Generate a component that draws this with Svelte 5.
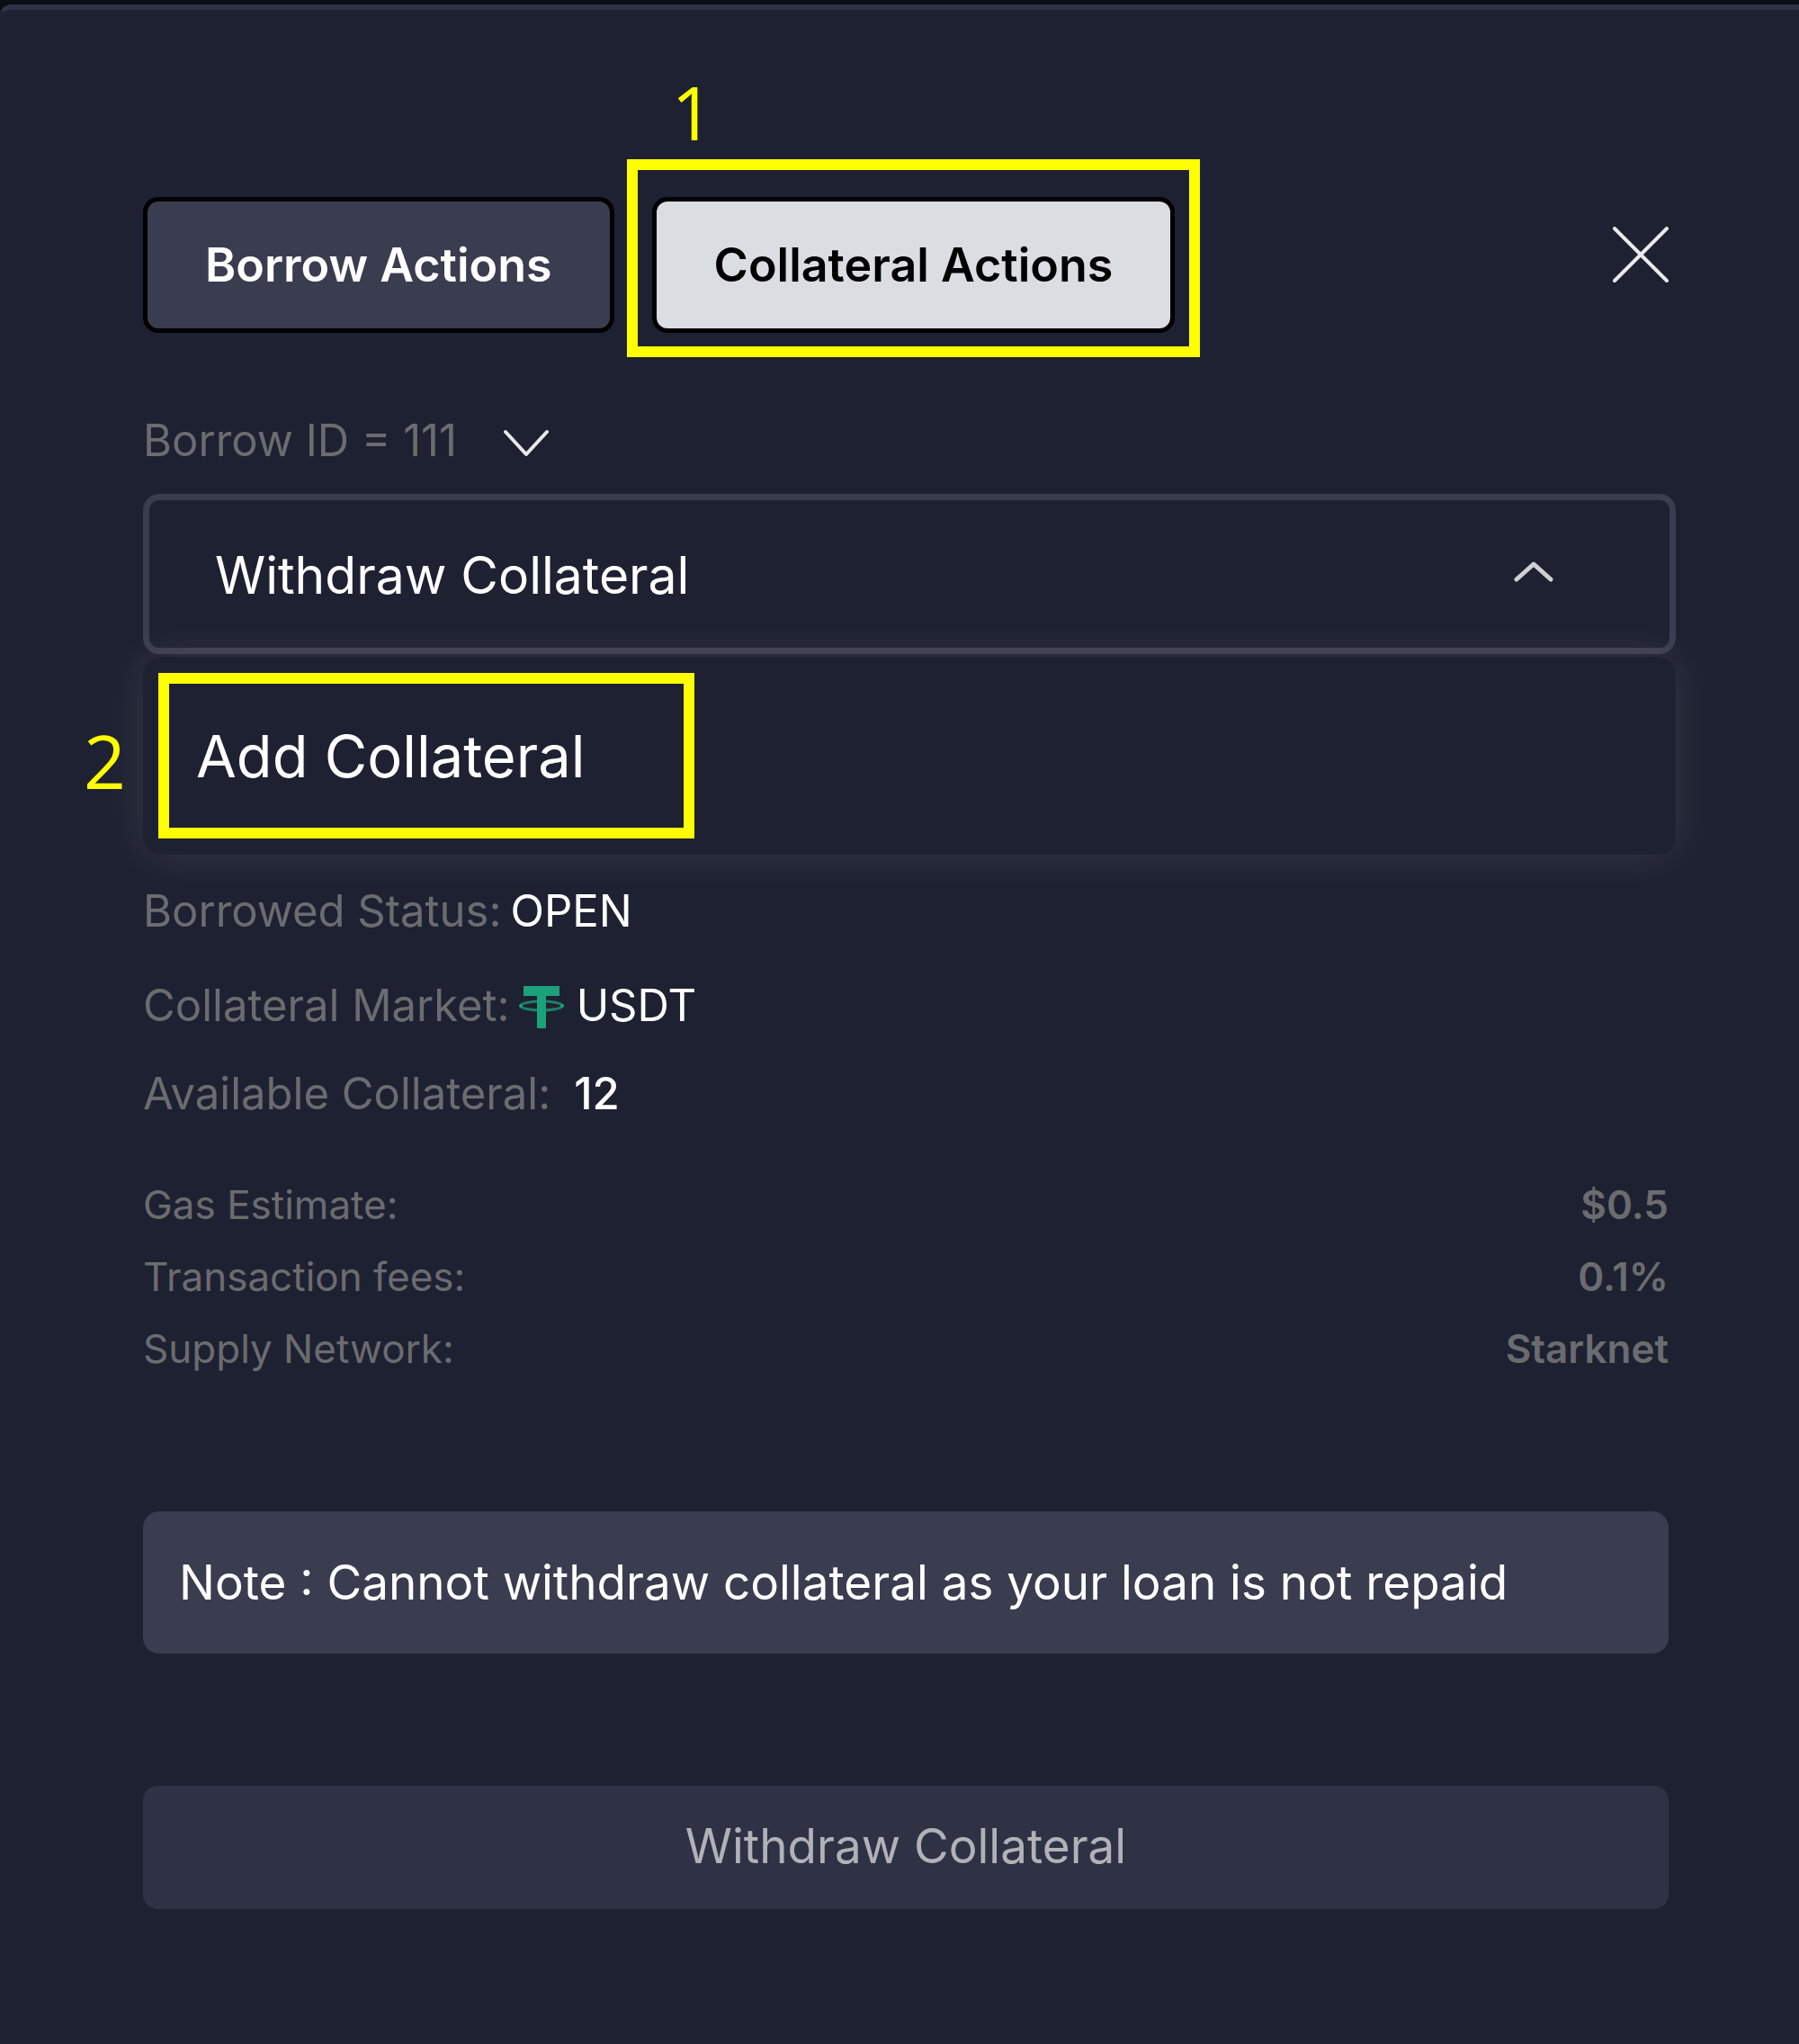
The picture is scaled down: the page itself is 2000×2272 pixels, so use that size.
<script>
  const tabs = [
    { label: 'Borrow Actions', active: false },
    { label: 'Collateral Actions', active: true, step: 1 }
  ];

  const fees = [
    ['Gas Estimate:', '$0.5'],
    ['Transaction fees:', '0.1%'],
    ['Supply Network:', 'Starknet']
  ];
</script>

<main class="modal">
  <header>
    <div class="tabs" role="tablist">
      {#each tabs as tab}
        <div class="tab-slot">
          <button class="tab" class:active={tab.active} role="tab" aria-selected={tab.active}>{tab.label}</button>
          {#if tab.step}
            <span class="frame" aria-hidden="true"></span>
            <span class="step step-one">{tab.step}</span>
          {/if}
        </div>
      {/each}
    </div>
    <button class="close" aria-label="Close">
      <svg width="62" height="62" viewBox="0 0 62 62" fill="none" stroke="#e9e9eb" stroke-width="4" stroke-linecap="round">
        <path d="M2 2 60 60M60 2 2 60" />
      </svg>
    </button>
  </header>

  <button class="borrow-id" aria-haspopup="listbox">
    <span>Borrow ID = 111</span>
    <svg width="50" height="36" viewBox="0 0 50 36" fill="none" stroke="#e9e9eb" stroke-width="4" stroke-linecap="round" stroke-linejoin="round">
      <path d="M2 8 25 33 48 8" />
    </svg>
  </button>

  <div class="dropdown">
    <button class="select" aria-haspopup="listbox" aria-expanded="true">
      <span>Withdraw Collateral</span>
      <svg width="44" height="32" viewBox="0 0 44 32" fill="none" stroke="#cfd0d4" stroke-width="5" stroke-linecap="round" stroke-linejoin="round">
        <path d="M3 21 22 4 41 21" />
      </svg>
    </button>
    <div class="options" role="listbox" aria-label="Collateral action">
      <button class="option" role="option" aria-selected="false">Add Collateral</button>
      <span class="step step-two">2</span>
    </div>
  </div>

  <dl class="info">
    <div><dt>Borrowed Status:</dt><dd>OPEN</dd></div>
    <div class="market">
      <dt>Collateral Market:</dt>
      <dd>
        <svg width="50" height="50" viewBox="0 0 50 50" fill="#1ba27a">
          <ellipse cx="25" cy="25" rx="23" ry="5" fill="none" stroke="#1b7f66" stroke-width="3" />
          <path d="M5 3h40v11H30v36H20V14H5z" />
          <circle cx="2" cy="25" r="2" />
          <circle cx="48" cy="25" r="2" />
        </svg>
        USDT
      </dd>
    </div>
    <div class="available"><dt>Available Collateral:</dt><dd>12</dd></div>
  </dl>

  <dl class="fees">
    {#each fees as [name, value]}
      <div><dt>{name}</dt><dd>{value}</dd></div>
    {/each}
  </dl>

  <p class="note">Note : Cannot withdraw collateral as your loan is not repaid</p>

  <button class="submit" disabled>Withdraw Collateral</button>
</main>

<style>
  :global(body) {
    background: #0b0d14;
  }
  .modal {
    box-sizing: border-box;
    min-height: calc(100vh - 5px);
    margin-top: 5px;
    padding: 208px 137px 150px 159px;
    border-top: 6px solid #2f3349;
    border-top-left-radius: 12px;
    background: #1e2131;
    color: #fff;
    font-family: Inter, sans-serif;
    display: flex;
    flex-direction: column;
  }
  button {
    margin: 0;
    padding: 0;
    border: 0;
    background: none;
    color: inherit;
    font-family: inherit;
  }
  svg {
    display: block;
    flex: none;
  }
  dl,
  dd {
    margin: 0;
  }
  header {
    display: flex;
    justify-content: space-between;
    align-items: flex-start;
    padding-right: 8px;
  }
  .tabs {
    display: flex;
    gap: 42px;
  }
  .tab-slot {
    position: relative;
  }
  .tab {
    display: block;
    height: 151px;
    padding: 0 64px;
    border: 5px solid #000;
    border-radius: 17px;
    background: #3a3c4f;
    font-size: 52px;
    font-weight: 600;
    white-space: nowrap;
  }
  .tab.active {
    background: #dadde2;
    color: #000;
  }
  .frame {
    position: absolute;
    inset: -42px -28px -27px -28px;
    border: 12px solid #ff0;
    pointer-events: none;
  }
  .step {
    position: absolute;
    color: #ff0;
    font: 82px/82px "Open Sans", sans-serif;
  }
  .step-one {
    top: -136px;
    left: 22px;
  }
  .step-two {
    top: 74px;
    left: -66px;
  }
  .close {
    margin-top: 33px;
  }
  .borrow-id {
    display: flex;
    align-items: center;
    align-self: flex-start;
    gap: 52px;
    margin-top: 90px;
    color: #6b6c70;
    font-size: 49px;
    line-height: 60px;
  }
  .dropdown {
    display: flex;
    flex-direction: column;
    gap: 3px;
    margin-top: 29px;
  }
  .select {
    box-sizing: border-box;
    display: flex;
    justify-content: space-between;
    align-items: center;
    height: 178px;
    padding: 2px 129px 0 73px;
    border: 7px solid #3a3c4f;
    border-radius: 18px;
    font-size: 57px;
  }
  .options {
    position: relative;
    padding: 18px 17px;
    border-radius: 20px;
    background: #1e2131;
    box-shadow: 0 0 48px rgba(255, 255, 255, 0.11);
  }
  .option {
    display: block;
    height: 184px;
    padding: 0 110px 0 30px;
    border: 12px solid #ff0;
    font-size: 65px;
  }
  .info {
    position: relative;
    display: flex;
    flex-direction: column;
    gap: 38px;
    margin-top: 33px;
    font-size: 49px;
    line-height: 60px;
  }
  .info div {
    display: flex;
    gap: 10px;
  }
  .info .market {
    padding-top: 7px;
  }
  .info .available {
    gap: 26px;
  }
  .info dt {
    color: #6b6c70;
  }
  .info dd {
    display: flex;
    align-items: center;
    gap: 14px;
  }
  .info .available dd {
    font-weight: 500;
  }
  .fees {
    display: flex;
    flex-direction: column;
    gap: 24px;
    margin-top: 65px;
    padding-right: 8px;
    color: #6b6c70;
    font-size: 44px;
    line-height: 56px;
  }
  .fees div {
    display: flex;
    justify-content: space-between;
  }
  .fees dd {
    font-weight: 600;
  }
  .note {
    margin: 153px 8px 0 0;
    padding: 49px 38px 49px 40px;
    border-radius: 18px;
    background: #3a3c4f;
    font-size: 53px;
    line-height: 60px;
  }
  .submit {
    height: 137px;
    margin: 147px 8px 0 0;
    padding-bottom: 4px;
    border-radius: 16px;
    background: #2f3245;
    color: #b1b2b8;
    font-size: 53px;
  }
</style>
